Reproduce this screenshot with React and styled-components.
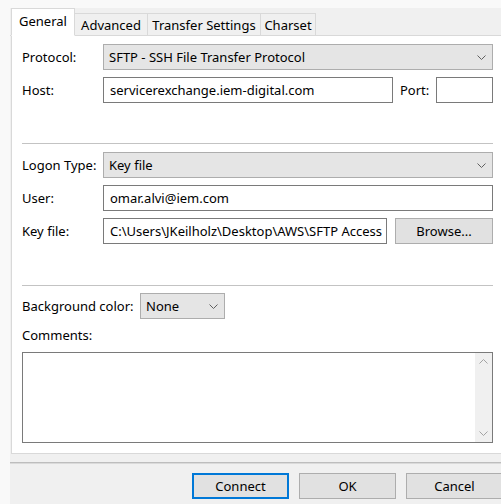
import React from "react";
import styled, { createGlobalStyle } from "styled-components";

const Global = createGlobalStyle`
  html, body {
    margin: 0;
    padding: 0;
    overflow: hidden;
    background: #f9f9f9;
  }
  body {
    font-family: "Noto Sans", "Liberation Sans", sans-serif;
    font-size: 13px;
    color: #000;
  }
`;

const Page = styled.div`
  width: 501px;
  height: 504px;
  overflow: hidden;
`;

const Dialog = styled.div`
  margin: 8px 0 0 10px;
  width: 510px;
  height: 496px;
  background: #f0f0f0;
  display: flex;
  flex-direction: column;
`;

const TabStrip = styled.div`
  height: 27px;
  display: flex;
  align-items: flex-end;
  border-bottom: 1px solid #d9d9d9;
  padding-left: 1px;
`;

const Tab = styled.div`
  box-sizing: border-box;
  width: ${(p) => p.$w}px;
  height: ${(p) => (p.$active ? 28 : 23)}px;
  margin-bottom: -1px;
  margin-left: ${(p) => (p.$first ? 0 : -1)}px;
  border: 1px solid #d9d9d9;
  border-bottom-color: ${(p) => (p.$active ? "#fff" : "#d9d9d9")};
  background: ${(p) => (p.$active ? "#fff" : "#f0f0f0")};
  display: flex;
  align-items: ${(p) => (p.$active ? "flex-start" : "center")};
  justify-content: center;
  padding-top: ${(p) => (p.$active ? 3 : 0)}px;
  position: relative;
  z-index: ${(p) => (p.$active ? 1 : 0)};
  white-space: nowrap;
`;

const Panel = styled.div`
  margin-left: 1px;
  background: #fff;
  border-left: 1px solid #d9d9d9;
  border-bottom: 1px solid #d9d9d9;
  padding: 8px 0 10px 10px;
  display: flex;
  flex-direction: column;
`;

const Form = styled.div`
  width: 471px;
  display: flex;
  flex-direction: column;
`;

const Group = styled.div`
  display: flex;
  flex-direction: column;
  gap: 7px;
  margin-top: ${(p) => p.$top || 0}px;
`;

const Row = styled.div`
  display: flex;
  align-items: center;
  height: 26px;
`;

const Label = styled.div`
  width: ${(p) => p.$w || 81}px;
  flex: none;
  white-space: nowrap;
`;

const Separator = styled.div`
  height: 1px;
  background: #c3c3c3;
  margin-top: ${(p) => p.$top}px;
`;

const Combo = styled.div`
  box-sizing: border-box;
  height: 26px;
  width: ${(p) => (p.$w ? `${p.$w}px` : "auto")};
  flex: ${(p) => (p.$w ? "none" : 1)};
  background: #e5e5e5;
  border: 1px solid #adadad;
  display: flex;
  align-items: center;
  justify-content: space-between;
  padding: 0 6px 0 5px;
  white-space: nowrap;
`;

const Input = styled.div`
  box-sizing: border-box;
  height: 26px;
  width: ${(p) => (p.$w ? `${p.$w}px` : "auto")};
  flex: ${(p) => (p.$w ? "none" : 1)};
  background: #fff;
  border: 1px solid #7a7a7a;
  display: flex;
  align-items: center;
  padding-left: 6px;
  overflow: hidden;
  white-space: nowrap;
`;

const PortLabel = styled.div`
  flex: 1;
  padding-left: 7px;
  white-space: nowrap;
`;

const Button = styled.div`
  box-sizing: border-box;
  width: ${(p) => p.$w || 97}px;
  height: 26px;
  flex: none;
  margin-left: ${(p) => p.$gap || 0}px;
  background: #e1e1e1;
  border: ${(p) => (p.$default ? "2px solid #0078d7" : "1px solid #adadad")};
  display: flex;
  align-items: center;
  justify-content: center;
  white-space: nowrap;
`;

const CommentsLabel = styled.div`
  height: 16px;
  line-height: 16px;
  margin-top: 8px;
`;

const TextArea = styled.div`
  box-sizing: border-box;
  margin-top: 9px;
  height: 91px;
  border: 1px solid #7a7a7a;
  display: flex;
  justify-content: flex-end;
`;

const ScrollBar = styled.div`
  width: 17px;
  background: #f0f0f0;
  display: flex;
  flex-direction: column;
  justify-content: space-between;
  align-items: center;
  padding: 6px 0;
`;

const Footer = styled.div`
  margin-top: 8px;
  border-top: 1px solid #bdbdbd;
  box-shadow: inset 0 1px 0 #dadada;
  padding: 10px 17px 0 0;
  display: flex;
  justify-content: flex-end;
  gap: 10px;
`;

const Chevron = ({ up, color = "#606060" }) => (
  <svg width="9" height="5" viewBox="0 0 9 5" style={{ display: "block" }}>
    <polyline
      points={up ? "0.5,4.5 4.5,0.5 8.5,4.5" : "0.5,0.5 4.5,4.5 8.5,0.5"}
      fill="none"
      stroke={color}
      strokeWidth="1"
    />
  </svg>
);

export default function App() {
  return (
    <Page>
      <Global />
      <Dialog>
        <TabStrip>
          <Tab $active $first $w={64}>General</Tab>
          <Tab $w={74}>Advanced</Tab>
          <Tab $w={114}>Transfer Settings</Tab>
          <Tab $w={56}>Charset</Tab>
        </TabStrip>
        <Panel>
          <Form>
            <Group>
              <Row>
                <Label>Protocol:</Label>
                <Combo>
                  <span>SFTP - SSH File Transfer Protocol</span>
                  <Chevron />
                </Combo>
              </Row>
              <Row>
                <Label>Host:</Label>
                <Input $w={290}>servicerexchange.iem-digital.com</Input>
                <PortLabel>Port:</PortLabel>
                <Input $w={57} />
              </Row>
            </Group>
            <Separator $top={40} />
            <Group $top={8}>
              <Row>
                <Label>Logon Type:</Label>
                <Combo>
                  <span>Key file</span>
                  <Chevron />
                </Combo>
              </Row>
              <Row>
                <Label>User:</Label>
                <Input>omar.alvi@iem.com</Input>
              </Row>
              <Row>
                <Label>Key file:</Label>
                <Input $w={284}>C:\Users\JKeilholz\Desktop\AWS\SFTP Access</Input>
                <Button $w={98} $gap={8}>Browse...</Button>
              </Row>
            </Group>
            <Separator $top={41} />
            <Group $top={7}>
              <Row>
                <Label $w={118}>Background color:</Label>
                <Combo $w={85}>
                  <span>None</span>
                  <Chevron />
                </Combo>
              </Row>
            </Group>
            <CommentsLabel>Comments:</CommentsLabel>
            <TextArea>
              <ScrollBar>
                <Chevron up color="#a3a3a3" />
                <Chevron color="#a3a3a3" />
              </ScrollBar>
            </TextArea>
          </Form>
        </Panel>
        <Footer>
          <Button $default>Connect</Button>
          <Button>OK</Button>
          <Button>Cancel</Button>
        </Footer>
      </Dialog>
    </Page>
  );
}
